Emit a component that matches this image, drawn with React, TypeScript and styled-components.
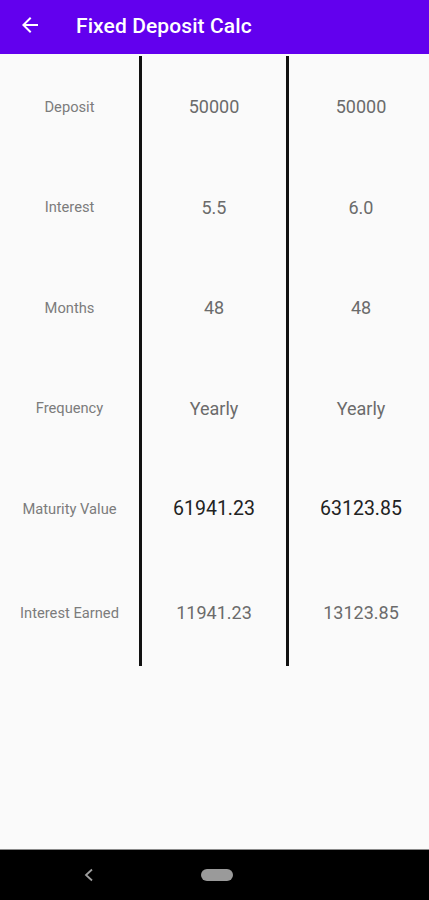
import React from "react";
import styled, { createGlobalStyle } from "styled-components";

const GlobalStyle = createGlobalStyle`
  html, body {
    margin: 0;
    padding: 0;
    background: #fafafa;
    font-family: Roboto, "Noto Sans", "Liberation Sans", sans-serif;
  }
`;

const Screen = styled.div`
  width: 429px;
  height: 900px;
  display: flex;
  flex-direction: column;
  background: #fafafa;
  overflow: hidden;
`;

const AppBar = styled.header`
  height: 54px;
  flex-shrink: 0;
  background: #6200ee;
  display: flex;
  align-items: center;
  padding-left: 18px;
  box-sizing: border-box;
`;

const BackButton = styled.button`
  width: 24px;
  height: 24px;
  padding: 0;
  border: none;
  background: transparent;
  display: flex;
  align-items: center;
  justify-content: center;
  margin-top: -4px;
`;

const Title = styled.h1`
  margin: -2px 0 0 34px;
  color: #ffffff;
  font-size: 21px;
  font-weight: 500;
  letter-spacing: 0.1px;
`;

const Content = styled.main`
  flex: 1;
  padding-top: 2px;
`;

const Table = styled.div`
  display: grid;
  grid-template-columns: 139px 147px 143px;
`;

const Column = styled.div<{ $divider?: boolean; $shift?: number }>`
  display: flex;
  flex-direction: column;
  border-left: ${(p) => (p.$divider ? "3px solid #111" : "none")};
  padding-left: ${(p) => p.$shift ?? 0}px;
`;

const Cell = styled.div<{ $height: number }>`
  height: ${(p) => p.$height}px;
  display: flex;
  align-items: center;
  justify-content: center;
`;

const Label = styled.span`
  font-size: 14.7px;
  color: #7c7c7c;
`;

const Value = styled.span<{ $strong?: boolean }>`
  font-size: ${(p) => (p.$strong ? "19.5px" : "18px")};
  color: ${(p) => (p.$strong ? "#222222" : "#6b6b6b")};
`;

const NavBar = styled.footer`
  height: 50px;
  flex-shrink: 0;
  background: #000;
  border-top: 1px solid #8a8a8a;
  position: relative;
`;

const NavBack = styled.svg`
  position: absolute;
  left: 83px;
  top: 18px;
`;

const HomePill = styled.span`
  position: absolute;
  left: 201px;
  top: 19px;
  width: 32px;
  height: 12px;
  border-radius: 6px;
  background: #9a9a9a;
`;

const heights = [101, 100, 101, 100, 101, 107];
const labels = ["Deposit", "Interest", "Months", "Frequency", "Maturity Value", "Interest Earned"];
const plans = [
  ["50000", "5.5", "48", "Yearly", "61941.23", "11941.23"],
  ["50000", "6.0", "48", "Yearly", "63123.85", "13123.85"],
];

const App: React.FC = () => {
  return (
    <Screen>
      <GlobalStyle />
      <AppBar>
        <BackButton aria-label="back">
          <svg width="24" height="24" viewBox="0 0 24 24">
            <path fill="#ffffff" d="M20 11H7.83l5.59-5.59L12 4l-8 8 8 8 1.41-1.41L7.83 13H20v-2z" />
          </svg>
        </BackButton>
        <Title>Fixed Deposit Calc</Title>
      </AppBar>
      <Content>
        <Table>
          <Column>
            {labels.map((l, i) => (
              <Cell key={l} $height={heights[i]}>
                <Label>{l}</Label>
              </Cell>
            ))}
          </Column>
          {plans.map((plan, pi) => (
            <Column $divider $shift={pi === 1 ? 4 : 0} key={pi}>
              {plan.map((v, i) => (
                <Cell key={i} $height={heights[i]}>
                  <Value $strong={i === 4}>{v}</Value>
                </Cell>
              ))}
            </Column>
          ))}
        </Table>
      </Content>
      <NavBar>
        <NavBack width="12" height="14" viewBox="0 0 12 14">
          <path d="M9 1.5 3 7l6 5.5" fill="none" stroke="#9e9e9e" strokeWidth="1.8" />
        </NavBack>
        <HomePill />
      </NavBar>
    </Screen>
  );
};

export default App;
